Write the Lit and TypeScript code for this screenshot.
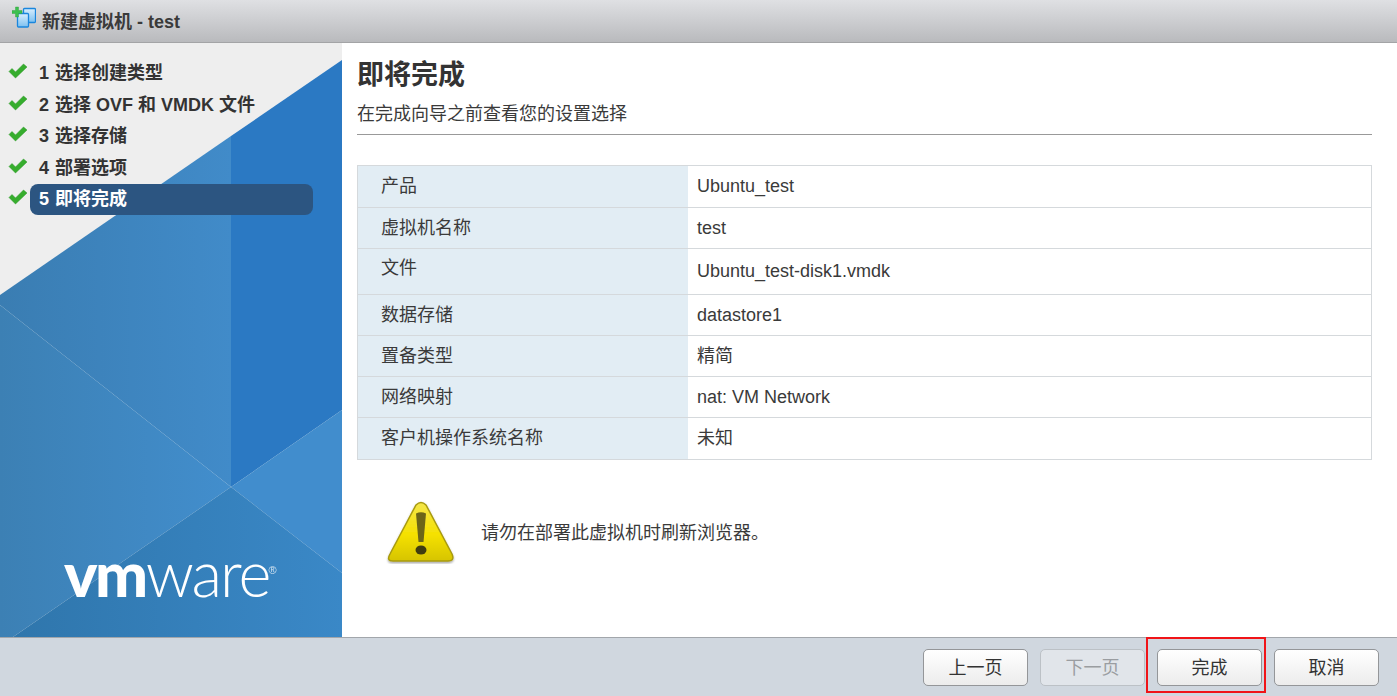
import { LitElement, html, css, svg } from "lit";
import { customElement } from "lit/decorators.js";

const STEPS: [string, string][] = [["1", "选择创建类型"], ["2", "选择 OVF 和 VMDK 文件"], ["3", "选择存储"], ["4", "部署选项"], ["5", "即将完成"]];
const ROWS: [string, string, string?][] = [
  ["产品", "Ubuntu_test", "r42"],
  ["虚拟机名称", "test", "r41"],
  ["文件", "Ubuntu_test-disk1.vmdk", "r46"],
  ["数据存储", "datastore1", "r41"],
  ["置备类型", "精简", "r41"],
  ["网络映射", "nat: VM Network", "r41"],
  ["客户机操作系统名称", "未知", "r42"],
];

const check = html`<svg class="check" width="20" height="16" viewBox="0 0 20 16"><path d="M1 8.5 L4 5.5 L7.5 9 L15.5 1 L19 4 L7.500 15 Z" fill="#36ad2d" stroke="#2b9426" stroke-width=".5"/></svg>`;

@customElement("app-root")
export class AppRoot extends LitElement {
  static styles = css`
    :host { display: block; width: 1397px; height: 696px; overflow: hidden; position: relative; background: #fff;
      font-family: "Liberation Sans", "Noto Sans CJK SC", sans-serif; font-size: 18px; color: #3a3a3a; }
    .page { display: grid; grid-template-rows: 43px 594px 59px; height: 696px; }
    .title { display: flex; align-items: center; gap: 6px; padding: 0 0 3px 12px; box-sizing: border-box;
      background: linear-gradient(#dfe0e3, #b9babd); border-bottom: 1px solid #a3a4a6; font-weight: bold; color: #3a3a3a; }
    .title svg { flex: none; align-self: flex-start; margin-top: 4px; }
    .main { display: grid; grid-template-columns: 342px 1fr; min-height: 0; }
    .side { position: relative; overflow: hidden; background: #eeeeee; }
    .side > svg.bg { position: absolute; inset: 0; }
    .steps { position: relative; display: flex; flex-direction: column; padding: 15px 29px 0 8px; color: #333; }
    .step { display: flex; height: 31.5px; font-weight: bold; }
    .check { flex: none; margin: 5px 2px 0 0; }
    .lab { flex: 1; padding-left: 9px; line-height: 31px; border-radius: 8px; height: 31px; }
    .lab span { margin-right: 1px; }
    .on .lab { background: #2c5581; color: #fff; }
    .logo { position: absolute; left: 64px; top: 495px; display: flex; align-items: baseline; color: #fff;
      font-family: Lato, "Liberation Sans", sans-serif; font-size: 63px; line-height: 70px; }
    .logo b { font-weight: 900; letter-spacing: -2.5px; }
    .logo .w { font-weight: 300; letter-spacing: -2px; }
    .logo i { font-style: normal; font-size: 11px; align-self: flex-start; line-height: 1; margin: 27px 0 0 -1px; opacity: .75; font-family: "Liberation Sans", sans-serif; }
    .content { padding: 0 25px 0 15px; min-width: 0; }
    h1 { margin: 0; font-size: 27px; font-weight: bold; line-height: 38px; padding-top: 13px; color: #333; }
    .sub { line-height: 26px; margin-top: 7px; padding-bottom: 7px; border-bottom: 1px solid #999; height: 26px; }
    .table { margin-top: 30px; border: 1px solid #d5d9dc; border-bottom: 0; }
    .row { display: grid; grid-template-columns: 330px 1fr; border-bottom: 1px solid #d5d9dc; box-sizing: border-box; }
    .r42 { height: 42px; } .r41 { height: 41px; } .r46 { height: 46px; }
    .k { background: #e2edf4; padding-left: 23px; line-height: 40px; }
    .v { padding-left: 9px; line-height: 40px; }
    .r46 .v { line-height: 44px; }
    .r46 .k { line-height: 38px; }
    .warn { display: flex; align-items: center; gap: 25px; margin: 40px 0 0 29px; }
    .warn span { margin-top: -3px; }
    .foot { position: relative; display: flex; justify-content: flex-end; gap: 12px; padding: 11px 18px 0 0; box-sizing: border-box;
      background: #d0d7df; border-top: 1px solid #a2a6ab; }
    button { width: 105px; height: 37px; box-sizing: border-box; border: 1px solid #949699; border-radius: 5px; margin: 0; padding: 0 0 3px;
      background: linear-gradient(#ffffff, #ececec); font: inherit; color: #333; }
    button:disabled { background: #e1e5ea; border-color: #bcc1c6; color: #9a9da1; }
    .mark { position: absolute; left: 1146px; top: 637px; width: 120px; height: 56px; box-sizing: border-box; border: 2px solid #f01418; pointer-events: none; }
  `;

  render() {
    return html`
      <div class="page">
        <div class="title">
          <svg width="24" height="24" viewBox="0 0 24 24">
            <defs><linearGradient id="w" x1="0" y1="0" x2="0" y2="1"><stop offset="0" stop-color="#d9eefd"/><stop offset="1" stop-color="#7cc0f0"/></linearGradient></defs>
            <rect x="11.500" y="4.500" width="12" height="14" rx="1" fill="url(#w)" stroke="#1a86dd" stroke-width="1.300"/>
            <rect x="5.500" y="9.500" width="11" height="13.500" rx="1" fill="url(#w)" stroke="#1a86dd" stroke-width="1.300"/>
            <path d="M3.500 3h3v3.500H10v3H6.500V13h-3V9.500H0v-3h3.500z" fill="#3cc04e" stroke="#2a9c3a" stroke-width=".4"/>
          </svg>
          <span>新建虚拟机 - test</span>
        </div>
        <div class="main">
          <div class="side">
            <svg class="bg" width="342" height="594" viewBox="0 0 342 594">
              <defs>
                <linearGradient id="a" gradientUnits="userSpaceOnUse" x1="0" x2="231" y1="0" y2="0"><stop offset="0" stop-color="#3a7db2"/><stop offset="1" stop-color="#418bc9"/></linearGradient>
                <linearGradient id="b" gradientUnits="userSpaceOnUse" x1="0" x2="231" y1="0" y2="0"><stop offset="0" stop-color="#3c80b4"/><stop offset="1" stop-color="#428ecd"/></linearGradient>
                <linearGradient id="c" gradientUnits="userSpaceOnUse" x1="13" x2="342" y1="0" y2="0"><stop offset="0" stop-color="#2f76ac"/><stop offset="1" stop-color="#3a88c7"/></linearGradient>
              </defs>
              ${svg`
                <polygon points="342,17 231,93 231,444 342,367" fill="#2b79c3"/>
                <polygon points="0,252 231,93 231,444 0,262" fill="url(#a)"/>
                <polygon points="0,262 231,444 13,594 0,594" fill="url(#b)"/>
                <polygon points="231,444 342,367 342,530" fill="#418dcd"/>
                <polygon points="13,594 231,444 342,530 342,594" fill="url(#c)"/>
              `}
            </svg>
            <div class="steps">
              ${STEPS.map(([n, s], i) => html`<div class="step ${i === 4 ? "on" : ""}">${check}<div class="lab"><span>${n}</span> ${s}</div></div>`)}
            </div>
            <div class="logo"><b>vm</b><span class="w">ware</span><i>®</i></div>
          </div>
          <div class="content">
            <h1>即将完成</h1>
            <div class="sub">在完成向导之前查看您的设置选择</div>
            <div class="table">
              ${ROWS.map(([k, v, c]) => html`<div class="row ${c}"><div class="k">${k}</div><div class="v">${v}</div></div>`)}
            </div>
            <div class="warn">
              <svg width="70" height="64" viewBox="0 0 70 64">
                <defs>
                  <linearGradient id="y" x1="0" y1="0" x2="0" y2="1"><stop offset="0" stop-color="#f4e64a"/><stop offset=".55" stop-color="#f5e100"/><stop offset="1" stop-color="#d6c400"/></linearGradient>
                  <filter id="s" x="-10%" y="-10%" width="120%" height="125%"><feDropShadow dx="0" dy="1.500" stdDeviation="1.200" flood-color="#000" flood-opacity=".35"/></filter>
                </defs>
                <path d="M30 4 Q35 -1 40 4 L66 53 Q69 60 62 60 L7 60 Q0 60 4 53 Z" transform="translate(0 1)" fill="url(#y)" stroke="#a89a10" stroke-width="1.500" filter="url(#s)"/>
                <path d="M30 13.500 Q35 11 40 13.500 L37.500 42 L32.500 42 Z" fill="#6b6518"/>
                <ellipse cx="35" cy="50" rx="5.500" ry="4.500" fill="#3f3c10"/>
              </svg>
              <span>请勿在部署此虚拟机时刷新浏览器。</span>
            </div>
          </div>
        </div>
        <div class="foot">
          <button>上一页</button><button disabled>下一页</button><button>完成</button><button>取消</button>
        </div>
      </div>
      <div class="mark"></div>
    `;
  }
}
